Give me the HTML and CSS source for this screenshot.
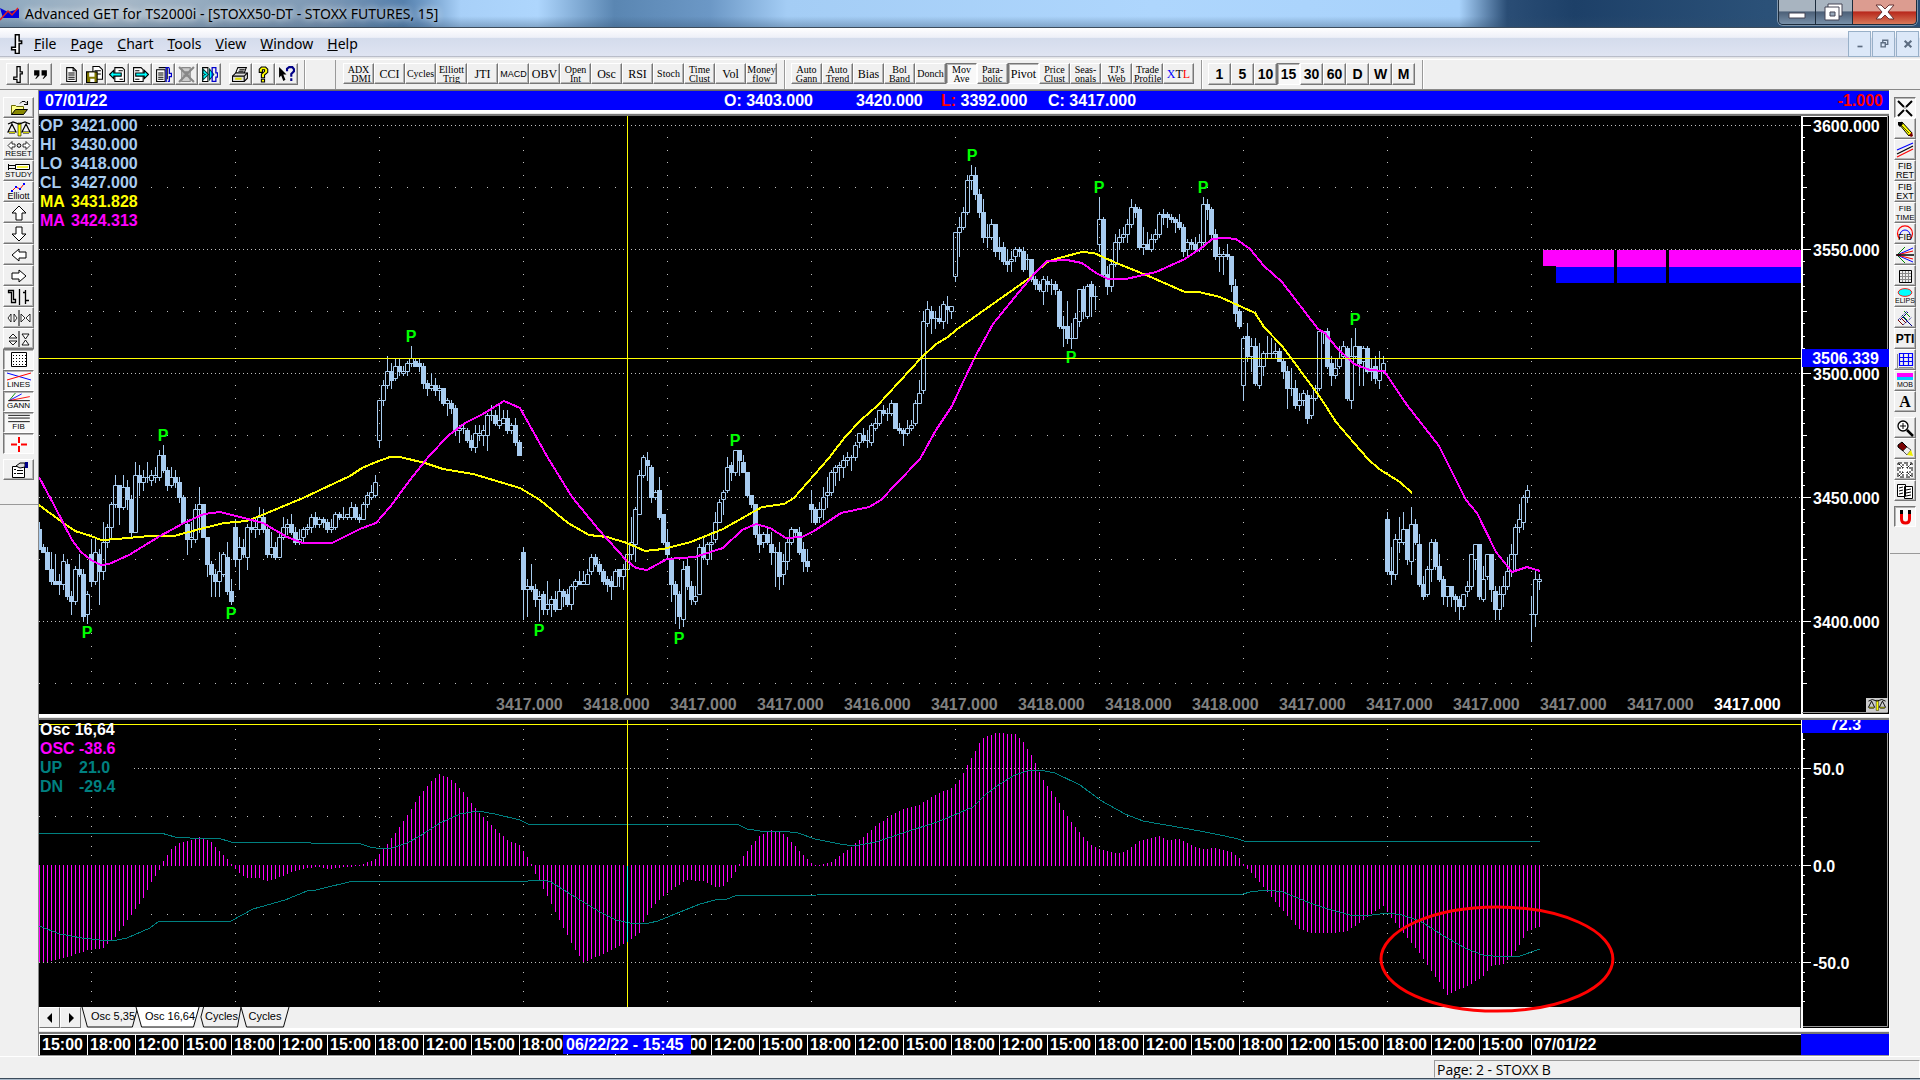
FILE: index.html
```html
<!DOCTYPE html>
<html lang="en">
<head>
<meta charset="utf-8">
<title>Advanced GET for TS2000i</title>
<link rel="stylesheet" href="styles.css">
</head>
<body>
<svg class="defs" aria-hidden="true">
  <symbol id="i-bar" viewBox="0 0 16 16"><path d="M7.500.5h3v5h2v2h-2v8h-3v-3h-3v-2h3z" fill="#fff" stroke="#000" stroke-width="1.200"/></symbol>
  <symbol id="i-quote" viewBox="0 0 16 16"><path d="M2 4h5v5l-3 3H3l2-3H2zM9 4h5v5l-3 3h-1l2-3H9z"/></symbol>
  <symbol id="i-page" viewBox="0 0 16 16"><path d="M3.500 1.500h6l3 3v10h-9z" fill="#fff" stroke="#000"/><path d="M9.500 1.500v3h3M5 6.500h6M5 8.500h6M5 10.500h6M5 12.500h6" fill="none" stroke="#000"/></symbol>
  <symbol id="i-save" viewBox="0 0 16 16"><path d="M6.500.5h6l3 3v9h-9z" fill="#fff" stroke="#000"/><path d="M8 4.500h6M10 7.500h4" stroke="#000"/><path d="M.5 5.500h10v10H.5z" fill="#807800" stroke="#000"/><path d="M3 6h5v4H3zM4 12h4v3H4z" fill="#fff"/></symbol>
  <symbol id="i-prev" viewBox="0 0 16 16"><path d="M5.500 1.500h7l2 2v11h-9z" fill="#fff" stroke="#000"/><path d="M9 4.500h4M10 12.500h3" stroke="#000"/><path d="M.5 8l4-4v2.500h7v3h-7V12z" fill="#0ff" stroke="#000"/></symbol>
  <symbol id="i-next" viewBox="0 0 16 16"><path d="M1.500 1.500h7l2 2v11h-9z" fill="#fff" stroke="#000"/><path d="M3 4.500h4M3 12.500h4" stroke="#000"/><path d="M15.500 8l-4-4v2.500h-8v3h8V12z" fill="#0ff" stroke="#000"/></symbol>
  <symbol id="i-pages" viewBox="0 0 16 16"><path d="M1.500 3.500h8v11h-8zM3.500 1.500h8v11" fill="#fff" stroke="#000"/><path d="M3 6.500h5M3 8.500h5M3 10.500h5M3 12.500h5" stroke="#000"/><path d="M10.500 1v14M10.500 1.500h3M12 14.500h2M13.500 2v5h2v3h-2v4" fill="none" stroke="#00c" stroke-width="1.200"/></symbol>
  <symbol id="i-gone" viewBox="0 0 16 16"><path d="M3.500 1.500h8v13h-8z" fill="#ccc" stroke="#888"/><path d="M1 1l14 14M15 1L1 15M5 6h6M5 9h6" stroke="#888" stroke-width="2"/></symbol>
  <symbol id="i-cyc" viewBox="0 0 16 16"><path d="M1.500 1.500h5v13h-5z" fill="#fff" stroke="#000"/><path d="M2 3l5 5-5 5V9l2-1-2-1zM8 3l4 5-4 5z" fill="#0ff" stroke="#044"/><path d="M10.500 1v14M10 1.500h4v5h1.500v4H14v4h-3" fill="none" stroke="#00c" stroke-width="1.200"/></symbol>
  <symbol id="i-print" viewBox="0 0 16 16"><path d="M5.500 1.500h8l-2 5h-8z" fill="#fff" stroke="#000"/><path d="M7 3.500h5M6 5h5" stroke="#000"/><path d="M.5 9.500l3-3h11v5l-3 3H.5z" fill="#ddd" stroke="#000"/><path d="M.5 9.500h11v5M11.500 9.500l3-3" fill="none" stroke="#000"/><path d="M3 12h6" stroke="#dd0" stroke-width="2"/></symbol>
  <symbol id="i-help" viewBox="0 0 16 16"><path d="M4 5V3l2-2h4l2 2v3L9 8.500V11H6V7.500L9 5V3.500H7V6H4zM6 12.500h3V15H6z" fill="#ff0" stroke="#000"/></symbol>
  <symbol id="i-what" viewBox="0 0 16 16"><path d="M1 1l7 7H5l2 5-2 1-2-5-2 2z"/><path d="M8.500 5V2.500l2-1.500h3L15 3v2l-2.500 2.500V10M12.500 11.500v2.500" fill="none" stroke="#008" stroke-width="2"/></symbol>
  <symbol id="i-open" viewBox="0 0 24 18"><path d="M4.500 15.500v-9h4l1 1h7v8z" fill="#ff8" stroke="#660"/><path d="M4.500 15.500l4-5h12l-4 5z" fill="#880" stroke="#000"/><path d="M13 4.500l2-2h3l2 2M20.500 2v4M17 5.500h4" fill="none" stroke="#000"/></symbol>
  <symbol id="i-scale" viewBox="0 0 24 18"><path d="M11 3h3v13h-3z" fill="#ff0" stroke="#000" stroke-width=".6"/><path d="M1 4l5-2 6 2 6-2 5 2M5 4L1 12h8L5 4zM19 4l-4 8h8l-4-8zM2 13h6M16 13h6" fill="none" stroke="#000" stroke-width="1.200"/><path d="M2 12.500h6M16 12.500h6" stroke="#cc0"/></symbol>
  <symbol id="i-reset" viewBox="0 0 24 9"><path d="M1 4.500l4-4v2.500h3v3H5v2.500zM23 4.500l-4-4v2.500h-3v3h3v2.500z" fill="#fff" stroke="#000" stroke-width=".8"/><circle cx="12" cy="4.500" r="1.800" fill="none" stroke="#000"/></symbol>
  <symbol id="i-study" viewBox="0 0 24 9"><path d="M1.500 2v6M1.500 3.500h7v3h-7" fill="none" stroke="#000"/><path d="M8.500 2.500h14v5h-14z" fill="#fff" stroke="#000"/><path d="M10 5h11" stroke="#ee0" stroke-width="1.500"/></symbol>
  <symbol id="i-ell" viewBox="0 0 24 9"><path d="M5 8l4-4 4 2 4-5" fill="none" stroke="#f00"/><path d="M4 7h2v2H4zM8 3h2v2H8zM12 5h2v2h-2zM16 0h2v2h-2z" fill="#00f"/></symbol>
  <symbol id="i-up" viewBox="0 0 24 18"><path d="M12 2l7 7h-4v7H9V9H5z" fill="#fff" stroke="#000"/></symbol>
  <symbol id="i-down" viewBox="0 0 24 18"><path d="M12 16l7-7h-4V2H9v7H5z" fill="#fff" stroke="#000"/></symbol>
  <symbol id="i-left" viewBox="0 0 24 18"><path d="M5 9l7-6v3h7v6h-7v3z" fill="#fff" stroke="#000"/></symbol>
  <symbol id="i-right" viewBox="0 0 24 18"><path d="M19 9l-7-6v3H5v6h7v3z" fill="#fff" stroke="#000"/></symbol>
  <symbol id="i-thick" viewBox="0 0 24 18"><path d="M1.500 2.500h5v9h2v3h-4v-10h-3zM12.500 1v16M18.500 2v14M16 4.500h2M19 12.500h3" fill="none" stroke="#000" stroke-width="1.300"/></symbol>
  <symbol id="i-wide" viewBox="0 0 24 18"><path d="M1 9l3-4v8zM10 9L7 5v8zM14 5l4 4-4 4zM23 5l-4 4 4 4z" fill="#fff" stroke="#000" stroke-width=".8"/><path d="M12 1v16" stroke="#000"/></symbol>
  <symbol id="i-tall" viewBox="0 0 24 18"><path d="M2 8l4-4 4 4zM2 11l4 4 4-4zM15 4h7l-3.500 5zM15 15h7l-3.500-5z" fill="#fff" stroke="#000" stroke-width=".9"/><path d="M12 1v16" stroke="#000"/></symbol>
  <symbol id="i-dots" viewBox="0 0 24 18"><path d="M4.500 1.500h15v14h-15z" fill="#fff" stroke="#000"/><path d="M6 4.500h13M6 7.500h13M6 10.500h13M6 13.500h13" stroke="#000" stroke-dasharray="1 2"/></symbol>
  <symbol id="i-lines" viewBox="0 0 24 9"><path d="M0 1l24 7" stroke="#00f"/><path d="M0 8l24-7" stroke="#f00"/></symbol>
  <symbol id="i-gann" viewBox="0 0 24 10"><path d="M1 8.500L8 0" stroke="#080"/><path d="M1 8.500L15 1" stroke="#00f"/><path d="M1 8.500L24 4" stroke="#f00"/><path d="M0 8.500h24" stroke="#000"/></symbol>
  <symbol id="i-fib" viewBox="0 0 24 10"><path d="M0 1.500h24M0 4.500h24M0 8.500h24" stroke="#000"/></symbol>
  <symbol id="i-cross" viewBox="0 0 24 18"><path d="M12 2v6M12 11v6M4 9.500h6M14 9.500h6" stroke="#f00" stroke-width="2"/></symbol>
  <symbol id="i-prop" viewBox="0 0 24 18"><path d="M5.500 5.500h12v11h-12z" fill="#fff" stroke="#000"/><path d="M7 8.500h2M10 9.500h6M7 12.500h2M10 12.500h6" stroke="#000"/><path d="M9 5l4-3h5v4l-5 1z" fill="#ddd" stroke="#000"/><path d="M18 1h3v6h-3z" fill="#008"/></symbol>
  <symbol id="i-x" viewBox="0 0 18 18"><path d="M2 2l6 6M16 2l-6 6M2 17l6-6M16 17l-6-6" stroke="#000" stroke-width="2"/><path d="M8.500 8.500h1v1h-1z"/></symbol>
  <symbol id="i-pencil" viewBox="0 0 18 18"><path d="M3 4l3-2 10 11-3 3z" fill="#ff0" stroke="#000"/><path d="M2 2l4 0 1 2-3 3-2-2z"/><path d="M13 15l3-3 1 4-2 1z" fill="#700"/><path d="M5 5l8 8" stroke="#000" stroke-width=".7"/></symbol>
  <symbol id="i-para" viewBox="0 0 18 18"><path d="M1 9L17 2" stroke="#00f" stroke-width="1.200"/><path d="M1 13L17 5" stroke="#000" stroke-width="1.200"/><path d="M1 16L17 8" stroke="#f00" stroke-width="1.200"/></symbol>
  <symbol id="i-arc" viewBox="0 0 18 18"><path d="M4 14a7.500 7.500 0 1 1 10 0" fill="none" stroke="#f00" stroke-width="1.200"/><path d="M4 10a5 5 0 0 1 10 0" fill="none" stroke="#00f"/></symbol>
  <symbol id="i-fan" viewBox="0 0 18 18"><path d="M1 9L9 1M1 9l8 8" stroke="#080"/><path d="M1 9l16-7M1 9l16 7" stroke="#00f"/><path d="M1 9l16-4M1 9l16 4" stroke="#f00"/><path d="M0 9h18" stroke="#000" stroke-width="1.500"/></symbol>
  <symbol id="i-grid" viewBox="0 0 18 18"><path d="M3.500 3.500h12v12h-12z" fill="#eee" stroke="#000"/><path d="M6.500 4v11M9.500 4v11M12.500 4v11M4 6.500h11M4 9.500h11M4 12.500h11" stroke="#888"/></symbol>
  <symbol id="i-elips" viewBox="0 0 18 10"><ellipse cx="9" cy="5" rx="7.500" ry="4.300" fill="#0ff" stroke="#f00"/></symbol>
  <symbol id="i-fork" viewBox="0 0 18 18"><path d="M7 8l9 9M4 11l8-8" stroke="#008"/><path d="M8 2l6 6M6 6l5 5" stroke="#080"/><path d="M2 11l5 5M5 9l5 5" stroke="#700"/><path d="M2 11L11 2M7 16l9-8" stroke="#008" stroke-dasharray="1 1"/></symbol>
  <symbol id="i-bgrid" viewBox="0 0 18 18"><path d="M3 16.500h14M1.500 3v14" stroke="#888"/><path d="M3.500 2.500h13v12h-13zM7.500 2v13M12.500 2v13M3 6.500h13M3 10.500h13" fill="none" stroke="#00f" stroke-width="1.200"/></symbol>
  <symbol id="i-mob" viewBox="0 0 18 7"><path d="M1 0h16v4H1z" fill="#f0f"/><path d="M1 4h16v3H1z" fill="#0cf"/></symbol>
  <symbol id="i-zoom" viewBox="0 0 18 18"><circle cx="7" cy="7" r="5" fill="#fff" stroke="#000" stroke-width="1.300"/><path d="M4 7h6M7 4v6" stroke="#000"/><path d="M11 11l6 6" stroke="#000" stroke-width="2.500"/></symbol>
  <symbol id="i-erase" viewBox="0 0 18 18"><path d="M2 5l4-3 5 5-4 4-5-4z" fill="#700" stroke="#000"/><path d="M7 11l4-4 4 3-4 5z" fill="#eee" stroke="#555"/><path d="M11 15l4-5 2 6z" fill="#ee0"/></symbol>
  <symbol id="i-zall" viewBox="0 0 18 18"><path d="M2 2h14v14H2z" fill="#fff" stroke="#000" stroke-dasharray="4 2"/><path d="M3 3l4 4M15 3l-4 4M3 15l4-4M15 15l-4-4M7 3v4H3M11 3v4h4M7 15v-4H3M11 15v-4h4" fill="none" stroke="#000" stroke-dasharray="2 1"/></symbol>
  <symbol id="i-books" viewBox="0 0 18 18"><path d="M1.500 2.500h8v12h-8zM8.500 4.500h8v12h-8z" fill="#fff" stroke="#000"/><path d="M3 6l4-1M3 9l4-1M3 12l4-1M10 8l5-1M10 11l5-1M10 14l5-1" stroke="#000"/></symbol>
  <symbol id="i-mag" viewBox="0 0 18 18"><path d="M5.500 6v5q0 4 4 4t4-4V6" fill="none" stroke="#e00" stroke-width="3"/><path d="M4 2h3v4H4zM12 2h3v4h-3z"/></symbol>
</svg>

<header class="title">
  <svg class="app-icon" viewBox="0 0 20 14" aria-hidden="true"><path d="M0 1l8 4 11-3v9H3z" fill="#00d"/><path d="M0 13L8 4l4 4 6-7" fill="none" stroke="#e02020" stroke-width="1.500"/></svg>
  <h1>Advanced GET for TS2000i - [STOXX50-DT - STOXX FUTURES, 15]</h1>
  <div class="win">
    <button aria-label="Minimize"><svg viewBox="0 0 20 16"><path d="M2 9h16v5H2z" fill="#fff" stroke="#445"/></svg></button>
    <button aria-label="Restore"><svg viewBox="0 0 20 18"><path d="M4 1h14v12H4z" fill="#fff" stroke="#445"/><path d="M1 4h14v13H1z" fill="#fff" stroke="#445"/><path d="M6 9h5v4H6z" fill="#9ab" stroke="#445"/></svg></button>
    <button class="close" aria-label="Close"><svg viewBox="0 0 20 16"><path d="M1 1h5l4 4 4-4h5l-6 7 6 7h-5l-4-4-4 4H1l6-7z" fill="#fff" stroke="#633"/></svg></button>
  </div>
</header>

<nav class="menu">
  <svg class="ico doc"><use href="#i-bar"/></svg>
  <button><u>F</u>ile</button><button><u>P</u>age</button><button><u>C</u>hart</button><button><u>T</u>ools</button><button><u>V</u>iew</button><button><u>W</u>indow</button><button><u>H</u>elp</button>
  <div class="mdi">
    <button aria-label="Minimize chart"><svg viewBox="0 0 12 12"><path d="M3 8h6v2H3z"/></svg></button>
    <button aria-label="Restore chart"><svg viewBox="0 0 12 12"><path d="M4.500 4V1.500h6v5H8M2.500 4.500h5v5h-5z" fill="none" stroke="#5c6c80" stroke-width="1.600"/></svg></button>
    <button aria-label="Close chart"><svg viewBox="0 0 12 12"><path d="M2 2l8 8M10 2l-8 8" stroke="#5c6c80" stroke-width="2.500"/></svg></button>
  </div>
</nav>

<div class="tools">
  <div class="band std">
    <div class="set"><button aria-label="Bar style"><svg class="ico"><use href="#i-bar"/></svg></button><button aria-label="Quote"><svg class="ico"><use href="#i-quote"/></svg></button></div>
    <div class="set"><button aria-label="New page"><svg class="ico"><use href="#i-page"/></svg></button><button aria-label="Save"><svg class="ico"><use href="#i-save"/></svg></button><button aria-label="Previous page"><svg class="ico"><use href="#i-prev"/></svg></button><button aria-label="Next page"><svg class="ico"><use href="#i-next"/></svg></button><button aria-label="Page list"><svg class="ico"><use href="#i-pages"/></svg></button><button aria-label="Delete page"><svg class="ico"><use href="#i-gone"/></svg></button><button aria-label="Cycle pages"><svg class="ico"><use href="#i-cyc"/></svg></button></div>
    <div class="set"><button aria-label="Print"><svg class="ico"><use href="#i-print"/></svg></button><button aria-label="Help"><svg class="ico"><use href="#i-help"/></svg></button><button aria-label="What is this"><svg class="ico"><use href="#i-what"/></svg></button></div>
  </div>
  <div class="band study">
    <button class="two">ADX<br>&nbsp;&nbsp;DMI</button><button>CCI</button><button class="two">Cycles</button><button class="two">Elliott<br>Trig</button><button>JTI</button><button class="tiny">MACD</button><button>OBV</button><button class="two">Open<br>Int</button><button>Osc</button><button>RSI</button><button class="two">Stoch</button><button class="two">Time<br>Clust</button><button>Vol</button><button class="two">Money<br>flow</button>
  </div>
  <div class="band study">
    <button class="two">Auto<br>Gann</button><button class="two">Auto<br>Trend</button><button>Bias</button><button class="two">Bol<br>Band</button><button class="two">Donch</button><button class="two on">Mov<br>Ave</button><button class="two">Para-<br>bolic</button><button class="on">Pivot</button><button class="two">Price<br>Clust</button><button class="two">Seas-<br>onals</button><button class="two">TJ's<br>Web</button><button class="two">Trade<br>Profile</button><button><span class="blue">X</span>T<span class="red">L</span></button>
  </div>
  <div class="band time">
    <button>1</button><button>5</button><button>10</button><button class="on">15</button><button>30</button><button>60</button><button>D</button><button>W</button><button>M</button>
  </div>
</div>

<main class="work">
  <aside class="side left">
    <div class="set">
      <button aria-label="Open"><svg class="full"><use href="#i-open"/></svg></button>
      <button aria-label="Scale"><svg class="full"><use href="#i-scale"/></svg></button>
      <button><svg class="half"><use href="#i-reset"/></svg>RESET</button>
      <button><svg class="half"><use href="#i-study"/></svg>STUDY</button>
      <button class="mixed"><svg class="half"><use href="#i-ell"/></svg>Elliott</button>
      <button aria-label="Up"><svg class="full"><use href="#i-up"/></svg></button>
      <button aria-label="Down"><svg class="full"><use href="#i-down"/></svg></button>
      <button aria-label="Left"><svg class="full"><use href="#i-left"/></svg></button>
      <button aria-label="Right"><svg class="full"><use href="#i-right"/></svg></button>
      <button aria-label="Bar width"><svg class="full"><use href="#i-thick"/></svg></button>
      <button aria-label="Bar spacing"><svg class="full"><use href="#i-wide"/></svg></button>
      <button aria-label="Price scale"><svg class="full"><use href="#i-tall"/></svg></button>
      <button class="on" aria-label="Grid"><svg class="full"><use href="#i-dots"/></svg></button>
      <button class="on"><svg class="half"><use href="#i-lines"/></svg>LINES</button>
      <button class="on"><svg class="half"><use href="#i-gann"/></svg>GANN</button>
      <button class="on"><svg class="half"><use href="#i-fib"/></svg>FIB</button>
      <button class="on" aria-label="Crosshair"><svg class="full"><use href="#i-cross"/></svg></button>
    </div>
    <div class="set"><button aria-label="Properties"><svg class="full"><use href="#i-prop"/></svg></button></div>
  </aside>

  <section class="desk">
    <div class="info">
      <span class="date">07/01/22</span><span class="open">O: 3403.000</span><span class="high">3420.000</span><span class="low"><b>L:</b> 3392.000</span><span>C: 3417.000</span><span class="net">-1.000</span>
    </div>
    <div class="split"></div>
    <div class="pane price">
      <div class="plot">
        <svg id="price" viewBox="39 116 1762 598" preserveAspectRatio="none"></svg>
        <dl class="legend">
          <dt>OP</dt><dd>3421.000</dd><dt>HI</dt><dd>3430.000</dd><dt>LO</dt><dd>3418.000</dd><dt>CL</dt><dd>3427.000</dd>
          <dt class="yel">MA</dt><dd class="yel">3431.828</dd><dt class="mag">MA</dt><dd class="mag">3424.313</dd>
        </dl>
        <div class="closes"><span>3417.000</span><span>3418.000</span><span>3417.000</span><span>3417.000</span><span>3416.000</span><span>3417.000</span><span>3418.000</span><span>3418.000</span><span>3418.000</span><span>3417.000</span><span>3417.000</span><span>3417.000</span><span>3417.000</span><span>3417.000</span><span class="now">3417.000</span></div>
      </div>
      <div class="axis">
        <svg id="priceAxis" viewBox="1801 116 88 598" preserveAspectRatio="none"></svg>
        <span class="tag at">3506.339</span>
        <svg class="corner"><use href="#i-scale"/></svg>
      </div>
    </div>
    <div class="split"></div>
    <div class="pane osc">
      <div class="stack">
        <div class="plot">
          <svg id="osc" viewBox="39 720 1762 287" preserveAspectRatio="none"></svg>
          <dl class="legend wide"><dt class="head">Osc 16,64</dt><dt class="mag">OSC</dt><dd class="mag">-38.6</dd><dt class="teal">UP</dt><dd class="teal">21.0</dd><dt class="teal">DN</dt><dd class="teal">-29.4</dd></dl>
        </div>
        <div class="tabs">
          <button class="arrow" aria-label="Scroll left"><svg viewBox="0 0 8 10"><path d="M6 0v10L1 5z"/></svg></button><button class="arrow" aria-label="Scroll right"><svg viewBox="0 0 8 10"><path d="M2 0v10l5-5z"/></svg></button>
          <button class="tab t1"><svg viewBox="0 0 60 21" preserveAspectRatio="none"><path d="M0 0l6 20h50l6-20"/></svg><span>Osc 5,35</span></button>
          <button class="tab t2"><svg viewBox="0 0 69 21" preserveAspectRatio="none"><path d="M0 0l6 20h56l6-20"/></svg><span>Osc 16,64</span></button>
          <button class="tab t3"><svg viewBox="0 0 46 21" preserveAspectRatio="none"><path d="M4 0l-3 10 3 10h38l4-20"/></svg><span>Cycles</span></button>
          <button class="tab t4"><svg viewBox="0 0 52 21" preserveAspectRatio="none"><path d="M0 0l6 20h40l6-20"/></svg><span>Cycles</span></button>
        </div>
      </div>
      <div class="axis">
        <svg id="oscAxis" viewBox="1801 720 88 308" preserveAspectRatio="none"></svg>
        <span class="tag top">72.3</span>
      </div>
      <svg class="ring" viewBox="0 0 236 108" preserveAspectRatio="none"><ellipse cx="118" cy="54" rx="116" ry="52"/></svg>
    </div>
    <div class="split"></div>
    <div class="clock">
      <ol id="hours"></ol>
      <span class="cursor">06/22/22 - 15:45</span>
      <div class="cap"></div>
    </div>
  </section>

  <aside class="side right">
    <div class="set">
      <button class="on" aria-label="Pointer"><svg class="full"><use href="#i-x"/></svg></button>
      <button aria-label="Pencil"><svg class="full"><use href="#i-pencil"/></svg></button>
      <button aria-label="Parallel lines"><svg class="full"><use href="#i-para"/></svg></button>
      <button>FIB<br>RET</button><button>FIB<br>EXT</button><button class="narrow">FIB<br>TIME</button>
      <button class="over"><svg class="full"><use href="#i-arc"/></svg><span>FIB</span></button>
      <button aria-label="Gann fan"><svg class="full"><use href="#i-fan"/></svg></button>
      <button aria-label="Gann box"><svg class="full"><use href="#i-grid"/></svg></button>
      <button class="small"><svg class="half"><use href="#i-elips"/></svg>ELIPS</button>
      <button aria-label="Pitchfork"><svg class="full"><use href="#i-fork"/></svg></button>
      <button class="pti">PTI</button>
      <button aria-label="Blue grid"><svg class="full"><use href="#i-bgrid"/></svg></button>
      <button class="small"><svg class="half"><use href="#i-mob"/></svg>MOB</button>
      <button class="letter">A</button>
    </div>
    <div class="set">
      <button aria-label="Zoom in"><svg class="full"><use href="#i-zoom"/></svg></button>
      <button aria-label="Erase"><svg class="full"><use href="#i-erase"/></svg></button>
      <button aria-label="Fit"><svg class="full"><use href="#i-zall"/></svg></button>
      <button aria-label="Copies"><svg class="full"><use href="#i-books"/></svg></button>
    </div>
    <div class="set"><button class="on" aria-label="Magnet"><svg class="full"><use href="#i-mag"/></svg></button></div>
  </aside>
</main>

<footer class="status"><span>Page: 2 - STOXX B</span></footer>
<div class="edge"></div>
<script src="chart.js"></script>
</body>
</html>
```

FILE: styles.css
```css
* { box-sizing: border-box; }
body {
  margin: 0; height: 100vh; min-height: 640px; overflow: hidden;
  display: flex; flex-direction: column;
  background: #f0f0f0; color: #000;
  font: 14px/16px "Liberation Sans", Arial, sans-serif;
}
button { margin: 0; padding: 0; border: 0; background: none; color: inherit; font: inherit; }
.defs { position: absolute; width: 0; height: 0; }
.ico { width: 17px; height: 17px; display: block; }
.red { color: #f00; } .blue { color: #00f; }

/* window caption */
.title {
  flex: none; height: 28px; display: flex; align-items: center; gap: 5px;
  border-bottom: 1px solid #3c4c5c;
  background:
    linear-gradient(transparent 60%, rgba(50,80,110,.35)),
    linear-gradient(90deg, #8fa9bf 0, #a8b9c8 6%, #8ea6bc 12%, #7d98b4 17%, #5580ad 21%, #6d98c4 22%, #a8d0f8 24%, #aed6fd 28%, #5a86b2 32%, #6c98c6 37%, #a4cdf5 41%, #aed6fd 60%, #a8d2fb 76%, #2a4d75 78.500%, #1d4068 82%, #2b5178 92%, #274c74 100%);
}
.app-icon { width: 20px; height: 14px; }
.title h1 { margin: 0; font: 14px/20px "Noto Sans", "Open Sans", sans-serif; white-space: nowrap; text-shadow: 0 0 6px rgba(255,255,255,.8), 0 0 10px rgba(255,255,255,.6); }
.win { margin-left: auto; margin-right: 3px; align-self: flex-start; display: flex; height: 25px; border: 1px solid #1c2c3c; border-top: 0; border-radius: 0 0 5px 5px; overflow: hidden; box-shadow: 0 0 0 1px rgba(255,255,255,.4); }
.win button { width: 37px; display: grid; place-items: center; border-right: 1px solid #1c2c3c; background: linear-gradient(#a8b4c0 45%, #4c6078 50%, #7890a8); }
.win svg { width: 20px; height: 18px; }
.win .close { width: 63px; border: 0; background: linear-gradient(#dc9c90 45%, #b8281c 50%, #d87858); }

/* menu bar */
.menu {
  flex: none; height: 31px; display: flex; align-items: center; gap: 2px; padding-left: 6px;
  font: 14px/20px "Noto Sans", "Open Sans", sans-serif;
  background: linear-gradient(#fff 0, #eef0f8 30%, #d4dcec 34%, #dfe4f2 90%, #b8bcc8 92%, #f0f0f0 96%);
}
.menu .doc { width: 20px; height: 20px; }
.menu > button { padding: 0 6px; }
.mdi { margin-left: auto; display: flex; gap: 1px; padding-right: 1px; }
.mdi button { width: 23px; height: 26px; display: grid; place-items: center; border: 1px solid #98b0c8; background: #dce8f8; }
.mdi svg { width: 10px; height: 10px; fill: #5c6c80; }

/* toolbars */
.tools { flex: none; height: 31px; display: flex; align-items: flex-start; border-top: 1px solid #fff; border-bottom: 1px solid #888; }
.band { display: flex; height: 29px; padding: 3px 7px 0 6px; border-right: 1px solid #999; box-shadow: 1px 0 #fff; }
.band.std { width: 305px; gap: 8px; margin-right: 30px; }
.band.std .set { display: flex; }
.band.std + .band { border-left: 1px solid #999; padding-left: 7px; }
.tools button, .side button {
  background: #f0f0f0; border: 1px solid; border-color: #fff #777 #777 #fff; box-shadow: inset -1px -1px #b4b4b4;
  display: flex; align-items: center; justify-content: center; overflow: hidden;
}
.tools .on, .side .on { background: #f8f8f8; border-color: #777 #fff #fff #777; box-shadow: inset 1px 1px #b4b4b4; }
.std button, .time button { width: 23px; height: 22px; }
.study button { width: 31px; height: 21px; font: 12px/12px "Liberation Serif", serif; }
.study .two { font-size: 10px; line-height: 9px; }
.study .tiny { font-size: 9px; font-family: "Liberation Sans", sans-serif; }
.time button { font: bold 14px/16px "Liberation Sans", sans-serif; }

/* work area */
.work { flex: 1; min-height: 0; display: flex; }
.side { flex: none; display: flex; flex-direction: column; gap: 5px; padding-top: 7px; border-bottom: 1px solid #999; align-self: flex-start; }
.side .set { display: flex; flex-direction: column; }
.side button { flex-direction: column; height: 21px; font: 8px/8px "Liberation Sans", sans-serif; }
.left { width: 38px; padding-left: 3px; padding-bottom: 24px; }
.left button { width: 31px; }
.left .full { width: 24px; height: 18px; }
.left .half { width: 24px; height: 9px; flex: none; }
.left .mixed { font-size: 9px; }
.right { width: 30px; padding-left: 4px; padding-bottom: 26px; }
.right button { width: 22px; font-size: 9px; line-height: 9px; }
.right .full { width: 18px; height: 18px; }
.right .half { width: 18px; height: 9px; flex: none; }
.right .narrow { font-size: 8px; }
.right .small { font-size: 7px; line-height: 8px; }
.right .over { position: relative; }
.right .over span { position: absolute; bottom: 1px; }
.right .pti { font: bold 12px/12px "Liberation Sans", sans-serif; }
.right .letter { font: bold 16px/18px "Liberation Serif", serif; }

.desk { flex: 1; min-width: 0; display: flex; flex-direction: column; border-left: 1px solid #888; border-right: 1px solid #fff; }
.info, .legend, .closes, .tag, .clock, .plot text, .axis text { font: bold 16px/19px "Liberation Sans", Arial, sans-serif; }
.info { flex: none; height: 20px; border-top: 1px solid #666; background: #00f; color: #fff; display: flex; padding: 0 6px; white-space: pre; }
.date { width: 679px; }
.open { width: 132px; }
.high { width: 85px; }
.low { width: 107px; }
.low b, .net { color: #f00; }
.net { margin-left: auto; }
.split { flex: none; height: 6px; background: linear-gradient(#fff 3px, #e8e8e8 3px, #e8e8e8 4px, #777 4px); }
.pane { display: flex; min-height: 0; position: relative; background: #000; }
.price { flex: 598 1 0; }
.osc { flex: 308 1 0; }
.stack { flex: 1; min-width: 0; display: flex; flex-direction: column; }
.plot { flex: 1; min-width: 0; min-height: 0; position: relative; background: #000; }
.plot > svg, .axis > svg:first-child { position: absolute; inset: 0; width: 100%; height: 100%; display: block; }
.axis { flex: none; width: 88px; position: relative; background: #000; }
.axis text { fill: #fff; }
.plot text { fill: #0f0; }

.legend { position: absolute; left: 0; top: 0; margin: 0; padding-left: 1px; width: 106px; display: grid; grid-template-columns: 31px 1fr; color: #a8ccf0; }
.legend dt, .legend dd { margin: 0; background: #000; }
.legend.wide { width: 95px; grid-template-columns: 39px 1fr; }
.legend .head { grid-column: 1 / 3; color: #fff; background: none; }
.legend .yel { color: #ff0; } .legend .mag { color: #f0f; } .legend .teal { color: #008080; }
.closes { position: absolute; right: 0; bottom: 0; display: flex; gap: 20px; padding-right: 20px; color: #808080; background: #000; }
.closes span { width: 67px; }
.closes .now { color: #fff; }
.tag { position: absolute; left: 1px; right: 0; background: #00f; color: #fff; text-align: center; }
.tag.at { top: 39%; height: 18px; }
.tag.top { top: 0; height: 13px; overflow: hidden; line-height: 9px; }
.corner { position: absolute; right: 1px; bottom: 2px; width: 22px; height: 14px; background: #ccc; }
.ring { position: absolute; left: 72.450%; top: 60%; width: 12.750%; height: 35.100%; fill: none; stroke: #f00; stroke-width: 3; }

.tabs { flex: none; height: 21px; display: flex; background: #f0f0f0; font-size: 11px; line-height: 14px; border-right: 1px solid #555; }
.tabs .arrow { width: 21px; display: grid; place-items: center; border: 1px solid; border-color: #fff #777 #777 #fff; }
.arrow svg { width: 8px; height: 10px; }
.tab { position: relative; height: 21px; }
.tab svg { position: absolute; left: 0; top: 0; width: 100%; height: 100%; overflow: visible; fill: #f0f0f0; stroke: #000; }
.tab span { position: relative; top: -2px; }
.tab.t1 { width: 54px; margin-left: 1px; padding-left: 8px; }
.tab.t2 { width: 64px; padding-left: 4px; z-index: 1; }
.tab.t2 svg { fill: #fff; }
.tab.t3 { width: 41px; padding-left: 2px; }
.tab.t4 { width: 48px; }

.clock { flex: none; height: 22px; display: flex; position: relative; background: #000; color: #fff; border-bottom: 1px solid #999; }
.clock ol { flex: 1; min-width: 0; margin: 0; padding: 0; list-style: none; display: flex; overflow: hidden; border-top: 1px solid #fff; }
.clock li { flex: none; width: 48px; padding-left: 2px; border-left: 1px solid #fff; }
.clock li.late { width: 52px; }
.clock li.day { width: auto; flex: 1; }
.cursor { position: absolute; left: 524px; top: 1px; width: 128px; padding-left: 3px; background: #00f; white-space: nowrap; }
.cap { flex: none; width: 88px; background: #00f; }

.status { flex: none; height: 22px; display: flex; justify-content: flex-end; border-top: 1px solid #fff; padding-top: 3px; font: 14px/18px "Open Sans", "Noto Sans", sans-serif; }
.status span { width: 486px; border: 1px solid; border-color: #999 #fff transparent #999; padding-left: 2px; line-height: 18px; white-space: nowrap; }
.edge { flex: none; height: 2px; border-top: 1px solid #3c4c5c; background: #a8b8c8; }
```

FILE: chart.js
```js
const rows = [];
const add = (tag, attrs, text) => {
  const a = Object.entries(attrs).map(([k, v]) => `${k}="${v}"`).join(' ');
  return `<${tag} ${a}>${text || ''}</${tag}>`;
};
const yP = p => 125.5 + (3600 - p) * 2.48;
const yO = v => 865.5 - v * 1.94;
const days = [91, 235, 379, 523, 667, 811, 955, 1099, 1243, 1387, 1531];

/* 15-minute bars: open high low close, in points above 3000 */
const bars = `437 440 429 429,430 431 428 428,428 430 421 421,421 428 415 416,416 427 415 415,416 419 411 415,415 427 413 424,423 425 409 410,410 412 403 408,408 422 407 421,421 427 418 419,419 421 400 402,403 412 399 411,
427 433 414 416,416 434 415 428,427 429 407 420,420 440 417 432,432 439 430 438,438 448 434 447,447 459 446 455,455 455 439 446,446 459 445 454,454 457 445 449,449 451 434 436,436 464 436 459,459 463 451 456,456 461 453 458,458 464 456 458,457 461 455 459,458 462 456 459,458 469 457 467,467 471 460 461,461 462 453 455,455 462 454 458,458 461 454 456,456 458 448 450,450 451 440 440,439 441 427 433,433 440 430 434,433 447 432 445,445 454 436 447,447 447 434 434,434 434 418 423,423 424 410 419,419 421 410 416,416 428 410 420,419 428 418 427,426 432 411 412,412 417 407 408,
438 441 422 425,425 434 413 430,430 433 426 427,426 439 421 438,438 441 436 437,437 441 434 438,437 446 435 442,442 445 436 437,437 438 426 427,427 436 426 430,430 432 425 426,426 436 426 434,434 442 433 438,438 441 435 439,439 443 435 436,436 438 431 432,432 437 431 433,434 438 432 437,437 439 435 438,438 443 436 442,442 444 438 439,439 442 438 441,441 442 438 440,440 441 436 437,437 441 436 438,438 444 437 443,443 444 441 442,442 446 441 442,442 443 441 443,442 448 441 446,446 447 441 442,442 443 440 441,441 448 441 447,447 452 446 451,450 455 449 452,451 459 450 456,
473 489 470 489,489 497 487 495,495 507 494 501,501 504 494 497,498 506 497 503,503 506 499 501,500 503 499 501,501 505 499 504,504 511 503 506,505 506 503 503,504 506 501 503,503 504 494 496,496 497 491 494,494 500 493 495,495 498 491 493,493 495 489 494,494 494 487 488,488 490 483 489,488 489 484 486,486 487 475 477,477 479 472 478,478 480 476 478,477 478 472 473,473 475 469 470,470 479 468 476,475 479 473 476,475 479 471 477,475 484 469 483,483 487 481 483,483 485 479 480,479 487 478 481,480 485 480 482,482 485 476 477,477 480 476 479,479 482 471 472,472 473 467 467,
428 430 401 413,413 417 402 414,414 423 412 413,413 415 406 409,409 412 400 410,411 412 403 405,405 416 403 407,407 410 402 409,409 412 404 405,405 417 405 412,412 413 406 410,411 413 406 407,407 415 405 414,414 417 413 416,416 420 415 415,415 420 415 416,415 421 415 419,420 427 419 426,426 427 422 423,423 424 419 420,420 421 415 416,417 418 412 415,416 418 409 414,414 421 414 420,421 421 414 418,418 423 413 421,421 431 420 427,427 442 425 432,431 446 424 445,443 461 443 459,459 467 458 466,465 468 457 463,462 463 448 450,450 453 449 452,453 458 441 442,443 443 431 432,
432 437 426 427,425 426 408 415,415 416 399 411,411 412 397 402,401 424 398 421,422 425 413 414,414 416 407 409,408 414 407 410,411 431 411 430,430 434 425 426,425 432 423 431,431 436 425 432,433 444 432 440,440 449 440 448,449 453 443 452,453 466 452 462,463 464 457 460,460 469 459 469,469 469 459 465,464 467 460 460,460 460 450 451,451 451 446 447,447 447 434 435,435 439 428 431,432 436 430 435,435 438 431 432,431 436 423 428,428 430 414 428,428 432 413 418,419 427 415 424,424 434 421 432,432 438 431 437,437 437 434 436,436 438 427 428,429 432 420 424,424 429 420 422,
447 453 440 445,445 446 439 440,442 448 440 445,445 454 441 450,451 458 446 452,452 461 451 460,460 463 455 462,462 464 457 463,462 467 458 465,465 468 463 466,466 467 461 466,466 472 465 471,472 476 470 476,475 478 472 473,473 477 470 473,472 480 471 479,478 482 477 480,480 485 479 485,485 487 483 484,484 486 481 484,484 489 483 488,488 488 478 478,478 480 476 477,477 478 471 476,476 481 475 478,478 481 477 479,480 489 479 488,488 497 488 492,493 525 492 521,520 529 519 526,525 527 516 522,522 525 518 522,522 527 520 521,521 529 518 528,527 531 520 526,525 527 522 527,
539 557 537 557,557 563 547 559,559 567 558 565,565 580 564 578,578 584 574 580,580 583 570 572,572 574 563 565,565 570 553 555,555 560 551 555,555 562 554 560,560 560 547 549,551 555 546 549,551 553 544 545,545 550 541 544,545 549 541 546,547 551 545 550,550 551 547 549,549 551 541 542,546 548 542 546,546 546 537 538,538 539 534 536,536 537 533 534,533 539 528 538,537 539 533 536,536 538 532 536,536 537 532 534,533 534 518 519,519 523 511 518,519 529 512 514,514 520 510 514,514 524 514 522,521 534 519 534,534 535 522 525,523 536 522 535,536 537 523 531,531 535 526 531,
552 571 549 562,562 563 539 540,540 543 532 535,535 546 533 544,544 556 543 553,553 558 550 555,555 559 553 556,556 562 553 560,560 570 559 567,567 568 563 565,566 567 550 551,551 559 548 552,552 557 550 550,550 556 549 554,554 558 553 556,556 565 555 564,564 566 560 563,564 565 559 563,563 564 561 562,562 563 557 561,561 564 558 559,559 560 547 549,550 554 547 553,553 554 550 552,552 555 549 550,550 556 549 553,553 571 551 568,568 570 562 566,566 567 554 556,556 558 546 547,547 551 541 548,547 549 540 548,548 552 546 547,547 547 533 536,535 538 521 524,525 526 518 519,
495 515 489 514,515 520 505 507,507 514 501 511,511 514 495 496,495 512 494 503,503 509 499 508,508 515 506 508,508 514 506 508,508 512 506 509,509 510 505 505,505 506 498 501,501 503 486 494,494 502 491 494,494 497 486 487,487 492 485 489,489 493 487 492,491 493 480 482,483 491 482 490,490 495 489 494,494 517 493 517,517 517 512 517,517 518 502 503,504 507 495 499,499 506 498 502,503 511 502 506,507 513 506 511,510 511 489 490,489 514 486 507,507 518 506 511,511 511 495 504,505 511 495 510,510 511 500 501,501 506 497 502,503 507 496 498,497 509 494 501,501 507 500 504,
441 444 419 420,420 430 415 419,419 435 417 433,432 442 428 433,432 444 431 437,437 437 423 425,424 446 419 439,439 441 431 432,431 435 414 415,415 418 409 410,411 422 410 421,421 433 416 432,432 433 421 422,422 427 416 417,417 418 407 410,410 414 406 414,414 414 406 410,410 411 404 409,409 410 401 406,406 411 405 411,412 416 410 414,414 427 413 427,425 431 421 431,431 431 409 410,409 422 408 417,418 427 417 427,427 427 408 413,412 414 401 405,405 414 401 411,411 418 406 414,414 426 413 420,420 431 418 427,427 439 420 438,438 447 436 441,440 451 437 450,450 455 448 453,
403 410 392 403,403 420 398 417,416 419 413 417`.split(',').map(s => s.trim().split(' ').map(Number));

const slow = '39,505 62,522 75,531 91,536 101,540 117,539 149,536 174,536 200,529 224,523 247,521 267,513 303,498 350,476 362,468 376,462 390,457 400,457 425,463 443,469 473,474 520,488 540,500 568,523 589,535 607,537 627,543 645,551 663,549 691,542 723,529 762,507 784,504 794,498 829,458 845,437 861,420 877,406 922,357 936,344 948,337 956,330 1031,277 1047,262 1059,258 1082,252 1094,253 1114,262 1146,275 1185,292 1199,292 1220,297 1255,313 1264,327 1282,346 1320,397 1336,422 1354,443 1368,459 1379,469 1400,482 1412,493';
const fast = '39,477 54,505 72,540 81,552 91,560 101,565 109,564 129,555 160,536 184,523 204,514 220,512 240,517 263,523 287,537 303,543 332,543 360,529 376,523 390,507 410,480 429,456 449,435 465,423 483,414 504,401 520,408 548,458 572,497 599,530 627,561 636,568 647,570 667,559 695,557 723,548 742,530 756,524 770,528 786,538 802,537 814,531 841,513 869,507 881,500 897,483 920,459 936,430 952,406 964,380 976,355 993,324 1019,292 1035,273 1047,261 1067,260 1082,263 1096,273 1108,279 1126,279 1156,272 1185,259 1204,246 1212,239 1225,238 1236,239 1250,249 1264,266 1282,282 1318,329 1325,333 1336,347 1354,364 1370,370 1384,371 1407,405 1439,446 1466,500 1477,513 1496,552 1512,572 1527,567 1540,571';
const pivots = [[86, 632], [162, 435], [230, 613], [410, 336], [538, 630], [678, 638], [734, 440], [1070, 357], [971, 155], [1098, 187], [1202, 187], [1354, 319]];

const hist = '39,961 49,961 60,958 76,953 88,949 103,947 107,943 115,936 127,919 143,897 151,881 159,869 163,861 171,849 179,843 200,837 211,842 219,851 227,859 231,864 239,872 247,877 259,877 267,880 275,878 291,871 307,867 318,866 327,868 343,866 360,865 375,859 383,849 395,833 407,815 419,796 431,781 439,774 447,777 455,783 463,792 479,813 495,829 507,840 519,845 523,851 529,860 535,873 547,895 559,919 575,949 583,961 591,958 607,951 627,941 639,932 643,921 651,907 663,895 675,886 687,879 703,880 715,886 723,885 731,877 739,864 743,856 751,845 759,836 771,830 779,831 787,837 795,846 803,855 811,863 815,865 823,864 831,862 843,853 859,840 875,826 891,815 903,809 919,805 931,797 943,791 951,788 959,780 971,758 979,743 983,738 995,733 1015,734 1023,742 1031,755 1043,780 1055,797 1067,816 1075,827 1083,837 1091,845 1099,849 1115,853 1123,852 1131,847 1139,841 1159,836 1167,840 1179,839 1195,847 1203,849 1215,848 1231,852 1239,858 1243,864 1251,872 1263,886 1279,906 1283,910 1291,919 1299,928 1311,932 1335,932 1347,930 1359,922 1371,913 1383,905 1391,917 1403,932 1419,952 1431,970 1439,981 1447,994 1455,990 1467,985 1483,975 1491,965 1503,963 1511,955 1519,944 1527,930 1539,926'.split(' ').map(s => s.split(',').map(Number));
const upper = '39,833 161,833 175,837 190,838 218,838 231,842 310,842 311,843 358,843 370,847 382,849 392,848 407,843 420,836 440,823 460,814 478,811 495,814 520,820 528,824 737,824 747,829 760,831 790,832 798,833 815,839 840,844 854,846 876,842 900,834 940,821 973,807 985,795 1000,784 1015,775 1030,770 1040,770 1055,773 1080,785 1100,800 1125,814 1143,821 1200,831 1225,836 1238,839 1244,841 1540,841';
const lower = '39,926 60,934 82,938 100,940 117,940 127,938 150,928 159,921 231,921 253,909 285,900 307,891 316,890 353,881 528,881 532,880 543,880 551,882 575,897 600,912 616,920 630,923 649,923 658,921 675,914 700,904 715,900 727,899 735,896 817,895 818,894 1243,894 1250,892 1266,890 1283,892 1310,903 1328,909 1350,915 1365,916 1387,913 1402,915 1420,921 1447,938 1467,949 1483,955 1503,957 1520,956 1540,949';

const at = x => {
  const i = Math.max(1, hist.findIndex(p => p[0] >= x));
  const [a, b] = [hist[i - 1], hist[i]];
  return Math.round(a[1] + (b[1] - a[1]) * (x - a[0]) / (b[0] - a[0]));
};
const dots = (x1, x2, y, step) => add('path', { d: `M${x1} ${Math.floor(y) + .5}H${x2}`, stroke: '#c0c0c0', 'stroke-dasharray': `1 ${step - 1}` });
const dot = (x, y) => `M${x} ${Math.floor(y) + .5}h1`;
const line = (pts, color, w) => add('polyline', { points: pts, fill: 'none', stroke: color, 'stroke-width': w, 'shape-rendering': 'crispEdges' });

/* price pane */
let s = '';
for (let p = 3600; p >= 3375; p -= 25) s += p % 50 ? dots(39, 1538, yP(p), 16) : dots(39, 1800, yP(p), 4);
let d = '';
for (const x of days) for (let p = 3595; p >= 3375; p -= 5) d += dot(x, yP(p));
s += add('path', { d, stroke: '#c0c0c0' });
s += '<path d="M1543 250h258v17h-245v-1h-13z" fill="#f0f"/><path d="M1556 267h245v16h-245z" fill="#00f"/><path d="M1614 250h3v33h-3zM1666 250h3v33h-3z" fill="#000"/>';
let wick = '', body = '', hollow = '';
bars.forEach(([o, h, l, c], i) => {
  const x = 39 + 4 * i;
  const Y = v => Math.round(yP(3000 + v) - .5);
  const t = Y(Math.max(o, c)), b = Y(Math.min(o, c));
  wick += `M${x + .5} ${Y(h)}V${t}M${x + .5} ${b}V${Y(l) + 1}`;
  if (c < o) body += `M${x - 2} ${t}h5V${b + 1}h-5z`;
  else hollow += `M${x - 1.5} ${t + .5}h4V${b + .5}h-4z`;
});
s += add('path', { d: wick, stroke: '#a8ccf0', fill: 'none' });
s += add('path', { d: hollow, stroke: '#a8ccf0', fill: 'none' });
s += add('path', { d: body, fill: '#a8ccf0' });
s += line(slow, '#ff0', 2) + line(fast, '#f0f', 2);
for (const [x, y] of pivots) s += add('text', { x: x + 1, y: y + 6, 'text-anchor': 'middle' }, 'P');
s += '<path d="M39 358.500H1801M627.500 116V695" stroke="#ff0"/>';
document.getElementById('price').innerHTML = s;

/* price scale */
s = '<path d="M1802 116V714" stroke="#fff" stroke-width="2"/><path d="M1802 116.500H1888" stroke="#fff"/><path d="M1887.500 116V712.500H1802" stroke="#999" fill="none"/>';
for (let p = 3600; p >= 3375; p -= 5) {
  const y = Math.floor(yP(p)) + .5;
  s += add('path', { d: `M1803 ${y}h${p % 50 === 0 ? 8 : p % 25 === 0 ? 4 : 2}`, stroke: '#fff' });
  if (p % 50 === 0) s += add('text', { x: 1813, y: y + 6.5 }, p + '.000');
}
document.getElementById('priceAxis').innerHTML = s;

/* oscillator pane */
s = dots(134, 1800, yO(50), 4) + dots(39, 1800, yO(0), 4) + dots(39, 1800, yO(-50), 4) + dots(39, 1538, yO(25) - 1, 16) + dots(151, 1538, yO(-25), 16);
d = '';
for (const x of days) for (let v = 70; v >= -70; v -= 5) d += dot(x, yO(v));
s += add('path', { d, stroke: '#c0c0c0' });
d = '';
for (let x = 39; x <= 1539; x += 4) {
  const y = at(x);
  d += y < 865 ? `M${x + .5} ${y}V866` : `M${x + .5} 865V${y + 1}`;
}
s += add('path', { d, stroke: '#f0f' });
s += line(upper, '#008080', 1) + line(lower, '#008080', 1);
s += '<path d="M39 724.500H1801M627.500 720V1007" stroke="#ff0"/><path d="M627.500 866V942" stroke="#0ff"/>';
document.getElementById('osc').innerHTML = s;

s = '<path d="M1802 720V1028" stroke="#fff" stroke-width="2"/><path d="M1887.500 720V1026.500H1803" stroke="#999" fill="none"/>';
for (let v = 65; v >= -70; v -= 5) {
  const y = Math.floor(yO(v)) + .5;
  s += add('path', { d: `M1803 ${y}h${v % 50 === 0 ? 8 : v % 25 === 0 ? 4 : 2}`, stroke: '#fff' });
  if (v % 50 === 0) s += add('text', { x: 1813, y: y + 6.5 }, v.toFixed(1));
}
document.getElementById('oscAxis').innerHTML = s;

/* time axis; the two cells under the cursor date stay empty */
const cycle = ['15:00', '18:00', '12:00'];
for (let i = 0; i < 31; i++) rows.push(`<li${i === 30 ? ' class="late"' : ''}>${i === 11 || i === 12 ? '' : cycle[i % 3]}</li>`);
rows.push('<li class="day">07/01/22</li>');
document.getElementById('hours').innerHTML = rows.join('');
```
